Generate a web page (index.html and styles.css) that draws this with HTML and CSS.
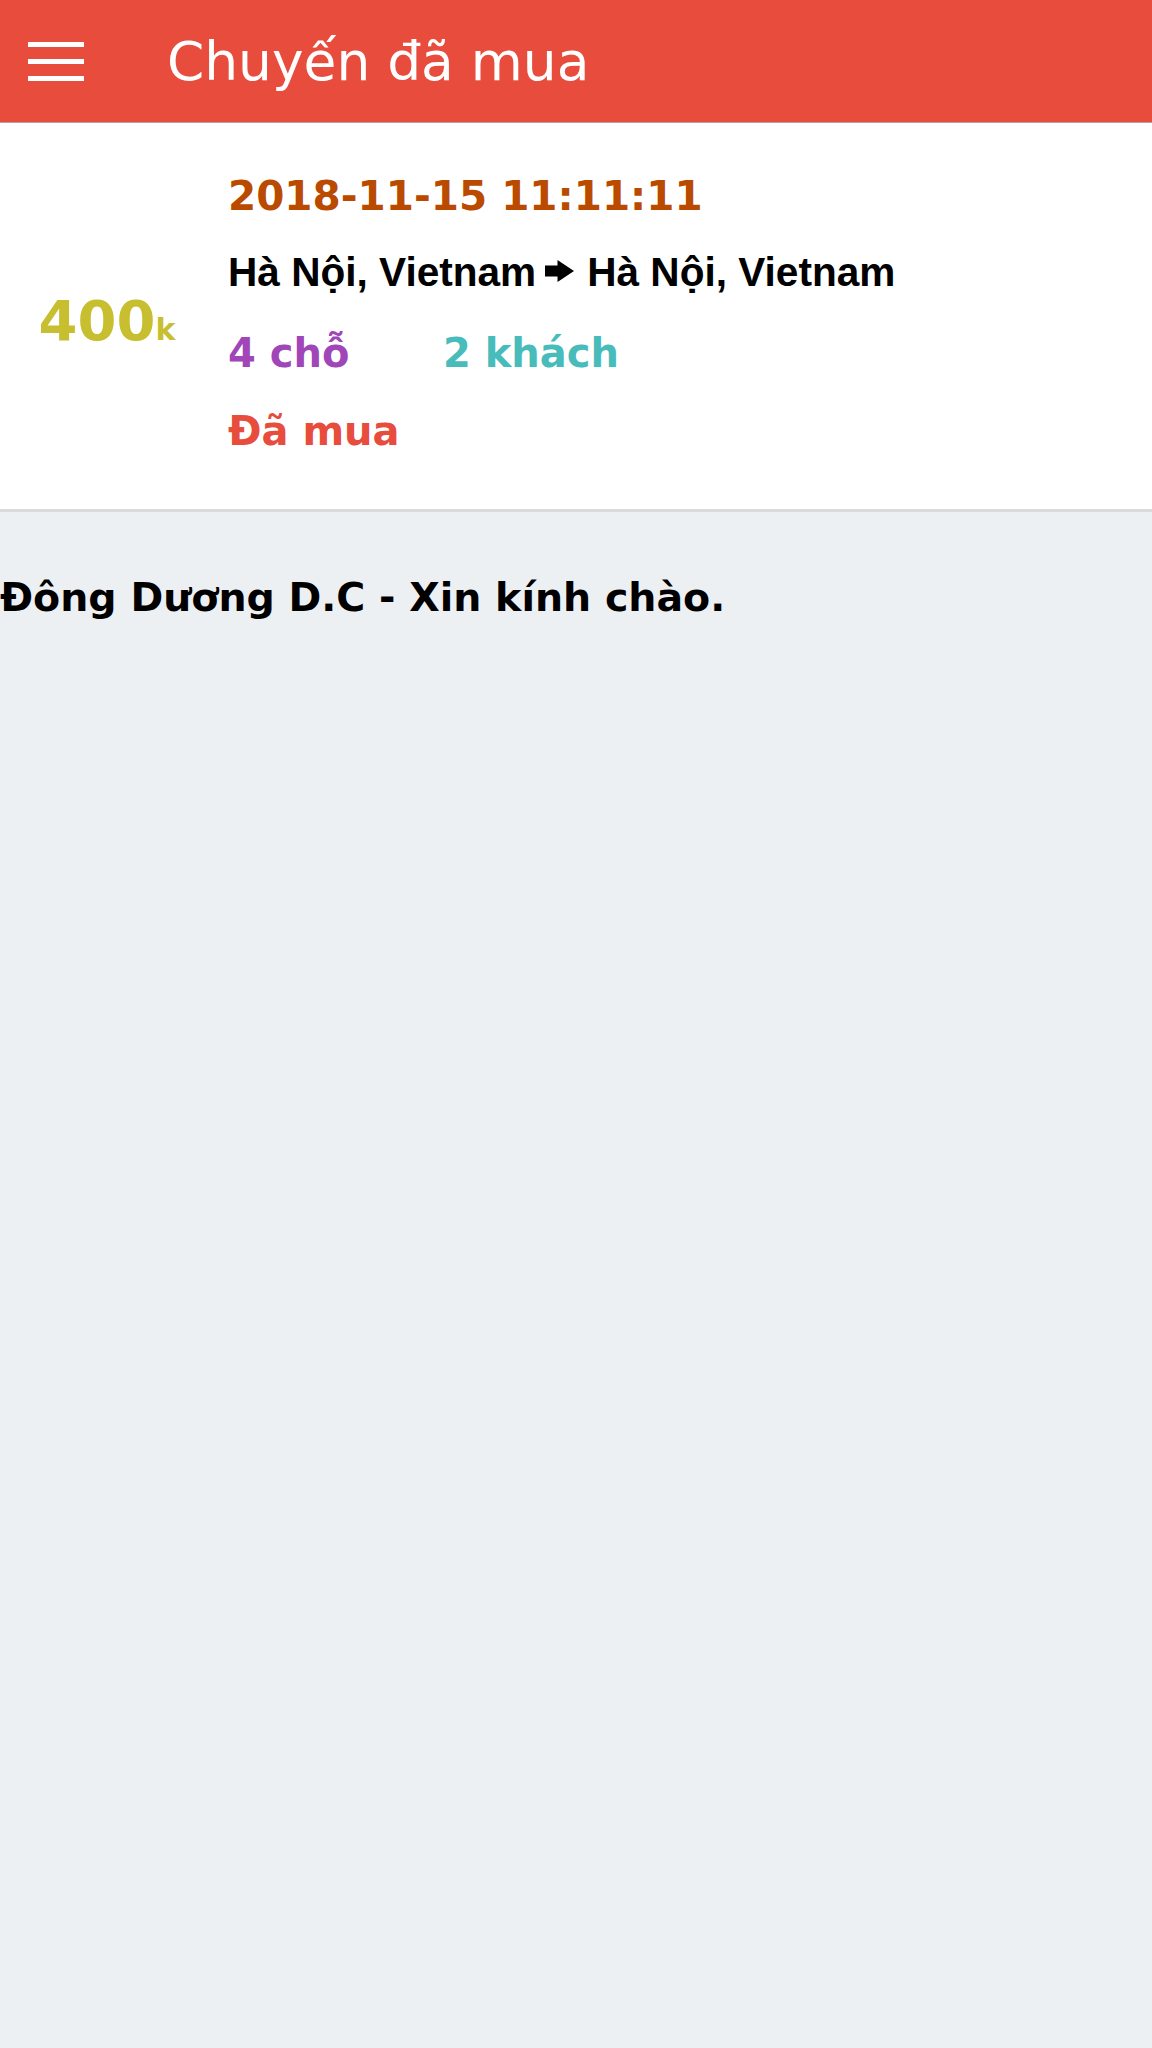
FILE: index.html
```html
<!DOCTYPE html>
<html lang="vi">
<head>
<meta charset="utf-8">
<title>Chuyến đã mua</title>
<link rel="stylesheet" href="styles.css">
</head>
<body>
<header class="topbar">
  <div class="menu-btn" aria-label="menu">
    <span class="bar"></span>
    <span class="bar"></span>
    <span class="bar"></span>
  </div>
  <h1 class="title">Chuyến đã mua</h1>
</header>

<section class="trip">
  <div class="price">400<span class="unit">k</span></div>
  <div class="info">
    <div class="date">2018-11-15 11:11:11</div>
    <div class="route">Hà Nội, Vietnam<svg class="arrow" viewBox="0 0 29 22" width="29" height="22"><polygon points="0,5.5 12.5,5.5 12.5,0 29,11 12.5,22 12.5,16.5 0,16.5" fill="#000"/></svg>Hà Nội, Vietnam</div>
    <div class="counts"><span class="seats">4 chỗ</span><span class="guests">2 khách</span></div>
    <div class="status">Đã mua</div>
  </div>
</section>

<p class="greeting">Đông Dương D.C - Xin kính chào.</p>
</body>
</html>
```

FILE: styles.css
```css
html, body {
  margin: 0;
  padding: 0;
}
body {
  background: #ecf0f3;
  font-family: "DejaVu Sans", sans-serif;
  color: #000;
  min-height: 2048px;
}

.topbar {
  height: 122px;
  background: #e74c3c;
  border-bottom: 1px solid #b9a19f;
  display: flex;
  align-items: center;
  padding-left: 28px;
  box-sizing: content-box;
}
.menu-btn {
  width: 56px;
  display: flex;
  flex-direction: column;
  gap: 12px;
}
.menu-btn .bar {
  display: block;
  height: 5px;
  background: #fff;
}
.title {
  margin: 0 0 0 83px;
  font-size: 53.4px;
  font-weight: normal;
  color: #fff;
  line-height: normal;
}

.trip {
  background: #fff;
  border-bottom: 3px solid #dadada;
  display: flex;
  padding: 43px 0 48px;
}
.price {
  width: 214px;
  flex: none;
  text-align: center;
  align-self: center;
  margin-top: 14px;
  font-weight: bold;
  font-size: 56px;
  color: #c8bf30;
}
.price .unit {
  font-size: 30px;
}
.info {
  padding-left: 14px;
  font-weight: bold;
  font-size: 40px;
}
.date {
  line-height: 60px;
  font-size: 40.5px;
  color: #ba4a00;
}
.route {
  margin-top: 16px;
  line-height: 60px;
  font-size: 40.6px;
  font-family: "Liberation Sans", Arial, sans-serif;
  display: flex;
  align-items: center;
}
.arrow {
  margin: 0 13px 0 9px;
  position: relative;
  top: -1px;
}
.counts {
  margin-top: 21px;
  line-height: 60px;
}
.seats {
  display: inline-block;
  width: 215px;
  color: #a046b8;
}
.guests {
  color: #47bcba;
}
.status {
  margin-top: 18px;
  line-height: 60px;
  color: #e74c3c;
}

.greeting {
  margin: 62px 0 0;
  font-weight: bold;
  font-size: 39.5px;
}
```
